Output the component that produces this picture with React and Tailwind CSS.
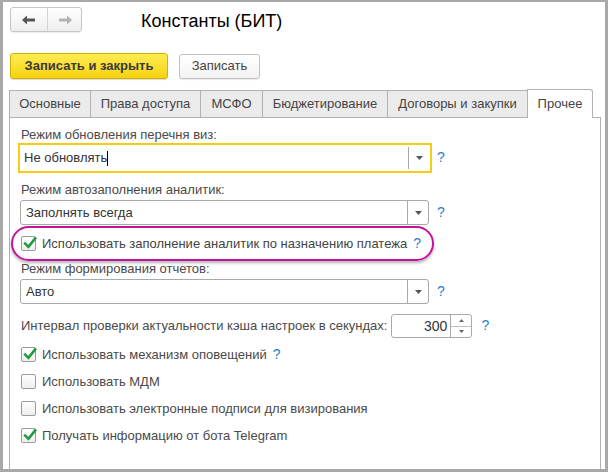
import React from "react";

const font = "font-['Liberation_Sans',Arial,sans-serif]";

function Arrow({ dir, color }) {
    return (
        <svg width="14" height="10" viewBox="0 0 14 10">
            {dir === "left" ? (
                <path d="M0 5 L5 0.5 L5 3.5 L13 3.5 L13 6.5 L5 6.5 L5 9.5 Z" fill={color} />
            ) : (
                <path d="M14 5 L9 0.5 L9 3.5 L1 3.5 L1 6.5 L9 6.5 L9 9.5 Z" fill={color} />
            )}
        </svg>
    );
}

function Help() {
    return <span className="text-[14px] leading-none text-[#2d7fc6]">?</span>;
}

function Checkbox({ checked }) {
    return (
        <span className="relative inline-block h-[15px] w-[15px] shrink-0 rounded-[2px] border border-[#9a9a9a] bg-gradient-to-b from-white to-[#eeeeee]">
            {checked && (
                <svg className="absolute left-[1px] top-[-1px]" width="14" height="14" viewBox="0 0 14 14">
                    <path d="M2.2 7.6 L5.4 10.8 L12.2 2.4" fill="none" stroke="#1f9a3e" strokeWidth="2.6" strokeLinecap="square" />
                </svg>
            )}
        </span>
    );
}

function DropArrow() {
    return (
        <svg width="7" height="4" viewBox="0 0 7 4">
            <path d="M0 0 L7 0 L3.5 4 Z" fill="#555" />
        </svg>
    );
}

function Select({ value, width }) {
    return (
        <div className={`flex h-[25px] ${width} items-stretch rounded-[3px] border border-[#a9a9a9] bg-white`}>
            <div className="flex flex-1 items-center pl-[5px] text-[13px] text-[#333]">{value}</div>
            <div className="flex w-[21px] items-center justify-center border-l border-[#a9a9a9]">
                <DropArrow />
            </div>
        </div>
    );
}

const tabs = [
    { label: "Основные", w: "w-[82px]" },
    { label: "Права доступа", w: "w-[111px]" },
    { label: "МСФО", w: "w-[63px]" },
    { label: "Бюджетирование", w: "w-[126px]" },
    { label: "Договоры и закупки", w: "w-[141px]" },
];

export default function App() {
    return (
        <div className={`${font} h-[472px] w-[608px] overflow-hidden border-b-[3px] border-l-[3px] border-r-[3px] border-t-2 border-[#a8a8a8] bg-white pl-[6px] pt-[5px]`}>
            {/* header */}
            <div className="ml-px flex items-center">
                <div className="flex h-[25px] w-[72px] rounded-[3px] border border-[#c6c6c6] bg-gradient-to-b from-white to-[#eeeeee] shadow-[0_1px_1px_rgba(0,0,0,0.08)]">
                    <div className="flex w-[37px] items-center justify-center border-r border-[#d4d4d4]">
                        <Arrow dir="left" color="#555" />
                    </div>
                    <div className="flex flex-1 items-center justify-center">
                        <Arrow dir="right" color="#b3b3b3" />
                    </div>
                </div>
                <h1 className="ml-[59px] mt-[2px] text-[18px] leading-none text-black">Константы (БИТ)</h1>
            </div>

            {/* command bar */}
            <div className="ml-px mt-[21px] flex items-center gap-[11px]">
                <button className="h-[26px] w-[158px] rounded-[3px] border border-[#d4b000] bg-gradient-to-b from-[#ffec4f] to-[#f6d200] text-[13px] font-bold text-[#3a3a3a] shadow-[0_1px_1px_rgba(0,0,0,0.15)]">
                    Записать и закрыть
                </button>
                <button className="h-[25px] w-[81px] rounded-[3px] border border-[#c2c2c2] bg-gradient-to-b from-white to-[#f3f3f3] text-[13px] text-[#444] shadow-[0_1px_1px_rgba(0,0,0,0.08)]">
                    Записать
                </button>
            </div>

            {/* tabs */}
            <div className="mt-[10px] flex items-end">
                {tabs.map((t, i) => (
                    <div
                        key={t.label}
                        className={`flex h-[27px] ${t.w} ${i > 0 ? "-ml-px" : ""} items-center justify-center border border-b-0 border-[#b2b2b2] bg-[#ebebeb] text-[13px] text-[#444]`}
                    >
                        {t.label}
                    </div>
                ))}
                <div className="relative z-10 -mb-px -ml-px flex h-[29px] w-[66px] items-center justify-center rounded-tr-[3px] border border-b-0 border-[#b2b2b2] bg-white pb-[1px] text-[13px] text-[#444]">
                    Прочее
                </div>
            </div>

            {/* panel */}
            <div className="h-[400px] w-[592px] border border-[#b2b2b2] pl-[11px] pt-[9px] text-[13px] text-[#4a4a4a]">
                <div className="leading-[15px]">Режим обновления перечня виз:</div>
                <div className="-ml-[3px] mt-px flex items-center">
                    <div className="flex h-[30px] w-[414px] items-center border-2 border-[#f8cb12] bg-white">
                        <div className="flex flex-1 items-center pl-[4px] text-[#333]">
                            Не обновлять
                            <span className="inline-block h-[15px] w-px bg-black" />
                        </div>
                        <div className="flex h-[22px] w-[22px] items-center justify-center border-l border-[#a9a9a9]">
                            <DropArrow />
                        </div>
                    </div>
                    <span className="ml-[5px]"><Help /></span>
                </div>

                <div className="mt-[9px] leading-[15px]">Режим автозаполнения аналитик:</div>
                <div className="-ml-px mt-[3px] flex items-center">
                    <Select value="Заполнять всегда" width="w-[409px]" />
                    <span className="ml-[8px]"><Help /></span>
                </div>

                <div className="-ml-[10px] mt-px flex h-[35px] w-[423px] items-center rounded-full border-2 border-[#c2139f] pl-[8px] shadow-[0_2px_3px_rgba(0,0,0,0.3)]">
                    <Checkbox checked />
                    <span className="ml-[6px] text-[#444]">Использовать заполнение аналитик по назначению платежа</span>
                    <span className="ml-[6px]"><Help /></span>
                </div>

                <div className="leading-[15px]">Режим формирования отчетов:</div>
                <div className="-ml-px mt-[3px] flex items-center">
                    <Select value="Авто" width="w-[409px]" />
                    <span className="ml-[8px]"><Help /></span>
                </div>

                <div className="mt-[10px] flex items-center">
                    <span>Интервал проверки актуальности кэша настроек в секундах:</span>
                    <div className="ml-[4px] flex h-[24px] w-[81px] rounded-[3px] border border-[#a9a9a9] bg-white">
                        <div className="flex flex-1 items-center justify-end pr-[3px] text-[14px] text-[#333]">300</div>
                        <div className="flex w-[21px] flex-col border-l border-[#a9a9a9]">
                            <div className="flex flex-1 items-center justify-center border-b border-[#bdbdbd]">
                                <svg width="5" height="3" viewBox="0 0 5 3"><path d="M0 3 L5 3 L2.5 0 Z" fill="#666" /></svg>
                            </div>
                            <div className="flex flex-1 items-center justify-center">
                                <svg width="5" height="3" viewBox="0 0 5 3"><path d="M0 0 L5 0 L2.5 3 Z" fill="#666" /></svg>
                            </div>
                        </div>
                    </div>
                    <span className="ml-[9px]"><Help /></span>
                </div>

                <div className="mt-[3px] flex flex-col">
                    <div className="flex h-[27px] items-center">
                        <Checkbox checked />
                        <span className="ml-[6px]">Использовать механизм оповещений</span>
                        <span className="ml-[6px]"><Help /></span>
                    </div>
                    <div className="flex h-[27px] items-center">
                        <Checkbox />
                        <span className="ml-[6px]">Использовать МДМ</span>
                    </div>
                    <div className="flex h-[27px] items-center">
                        <Checkbox />
                        <span className="ml-[6px]">Использовать электронные подписи для визирования</span>
                    </div>
                    <div className="flex h-[27px] items-center">
                        <Checkbox checked />
                        <span className="ml-[6px]">Получать информацию от бота Telegram</span>
                    </div>
                </div>
            </div>
        </div>
    );
}
